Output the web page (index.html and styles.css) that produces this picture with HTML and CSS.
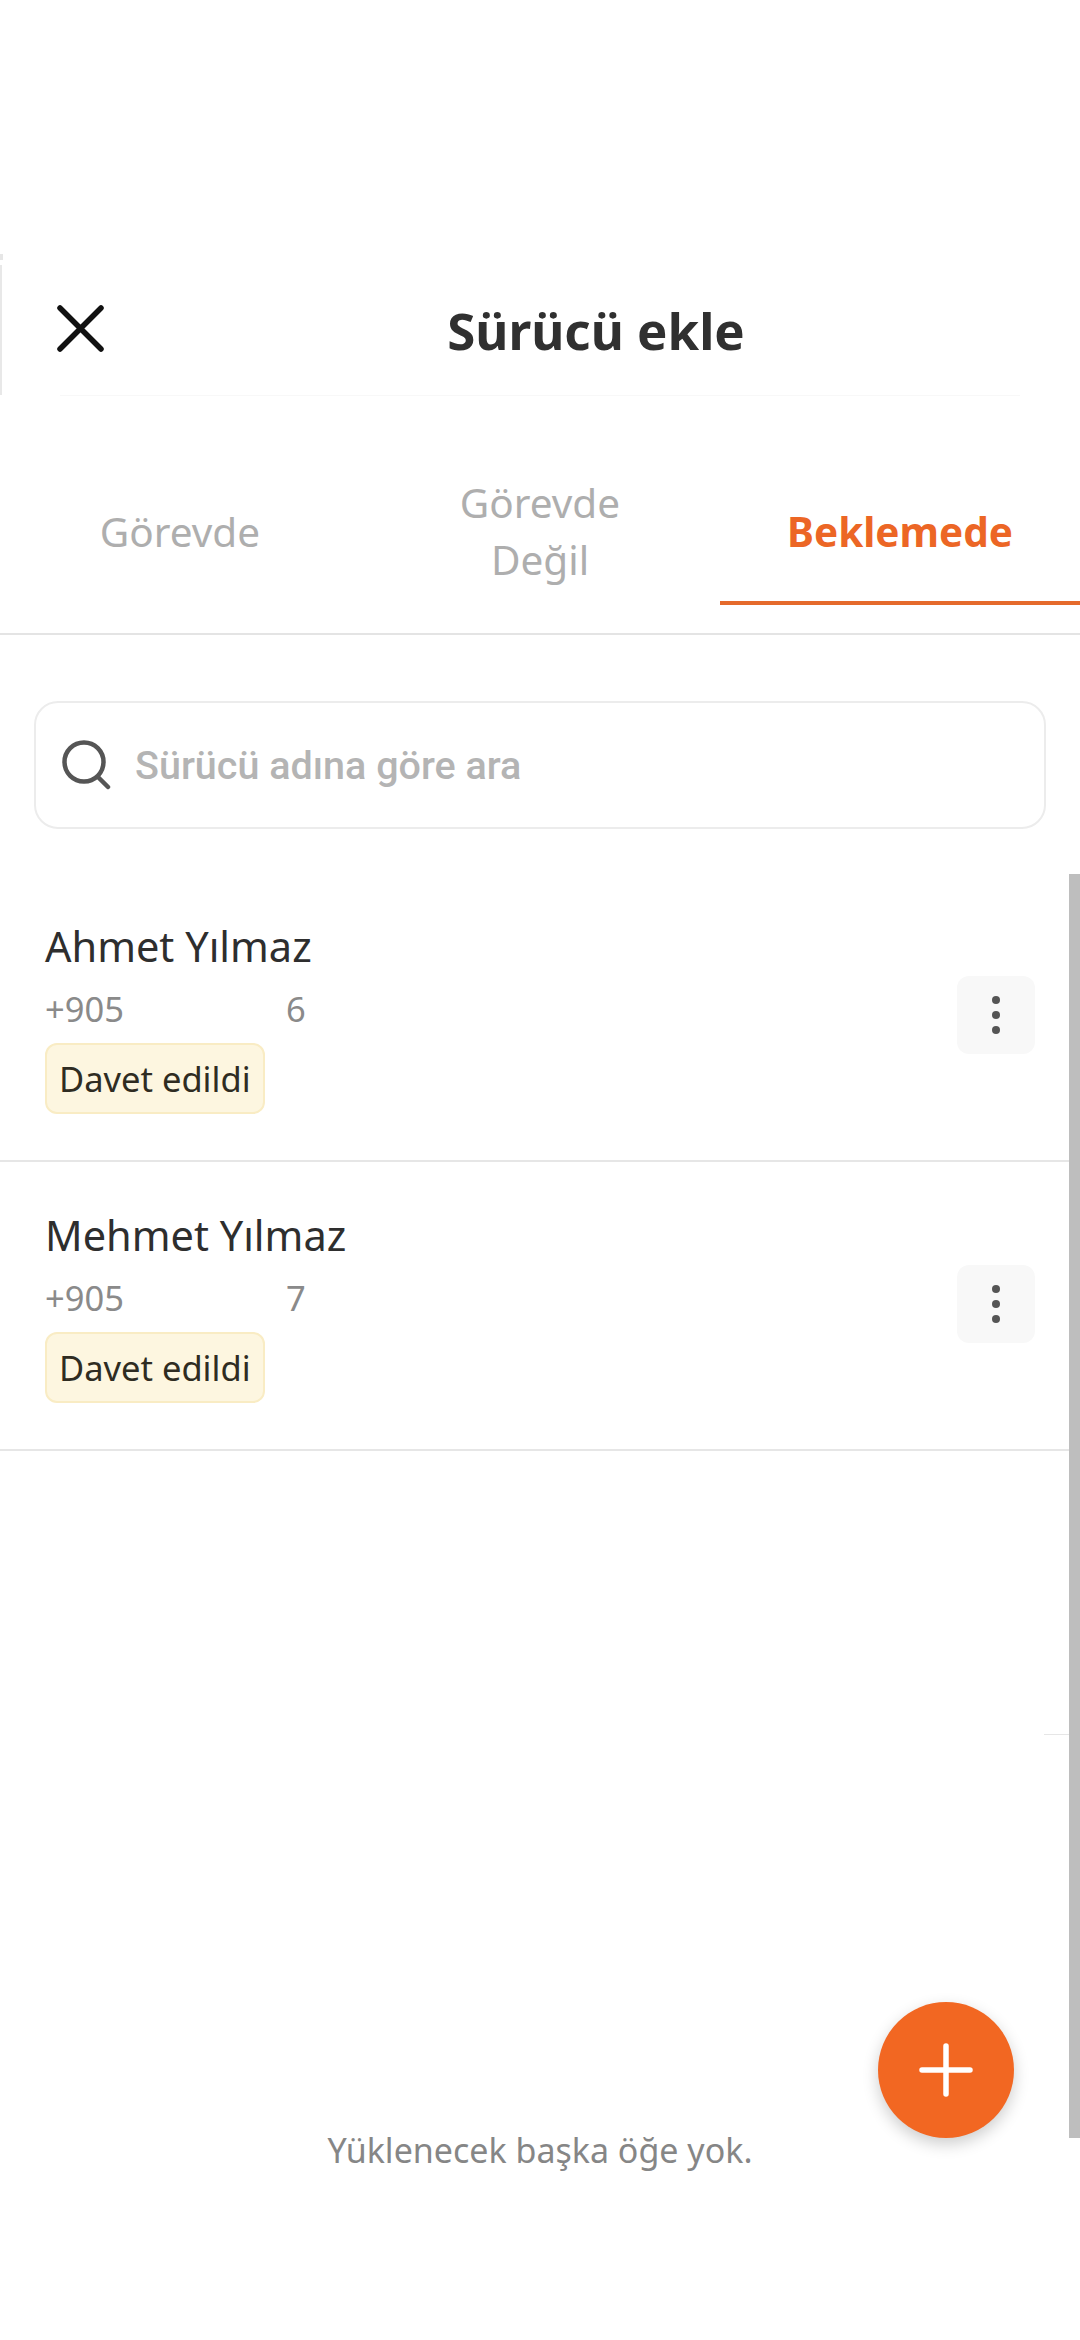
FILE: index.html
```html
<!DOCTYPE html>
<html lang="tr">
<head>
  <meta charset="UTF-8" />
  <meta name="viewport" content="width=device-width, initial-scale=1.0"/>
  <title>Sürücü ekle</title>
  <link rel="stylesheet" href="styles.css">
</head>
<body>

  <div class="top-space"><div class="top-tick"></div></div>

  <div class="header">
    <div class="close-btn">
      <svg width="49" height="49" viewBox="0 0 49 49" fill="none" stroke="#111" stroke-width="5.5" stroke-linecap="round">
        <path d="M4 4L45 45M45 4L4 45"/>
      </svg>
    </div>
    <h1 class="title">Sürücü ekle</h1>
  </div>
  <div class="header-rule"></div>

  <div class="tabs-wrap">
    <div class="tabs">
      <div class="tab">Görevde</div>
      <div class="tab">Görevde<br>Değil</div>
      <div class="tab active">Beklemede</div>
    </div>
  </div>

  <div class="search">
    <svg width="50" height="50" viewBox="0 0 50 50" fill="none" stroke="#555" stroke-width="4.5" stroke-linecap="round">
      <circle cx="22" cy="22" r="19.5"/>
      <path d="M36 37L46 47"/>
    </svg>
    <span class="search-text">Sürücü adına göre ara</span>
  </div>

  <div class="driver-list">
    <div class="driver">
      <div class="driver-info">
        <div class="driver-name">Ahmet Yılmaz</div>
        <div class="driver-phone"><span class="phone-start">+905</span><span>6</span></div>
        <div class="badge">Davet edildi</div>
      </div>
      <div class="menu-btn"><i></i><i></i><i></i></div>
    </div>
    <div class="driver">
      <div class="driver-info">
        <div class="driver-name">Mehmet Yılmaz</div>
        <div class="driver-phone"><span class="phone-start">+905</span><span>7</span></div>
        <div class="badge">Davet edildi</div>
      </div>
      <div class="menu-btn"><i></i><i></i><i></i></div>
    </div>
  </div>

  <div class="list-end">Yüklenecek başka öğe yok.</div>

  <!-- overlays -->
  <div class="scroll-stub"></div>
  <div class="scrollbar"></div>
  <div class="fab">
    <svg width="54" height="54" viewBox="0 0 54 54" fill="none" stroke="#fff" stroke-width="5.5" stroke-linecap="round">
      <path d="M27 3V51M3 27H51"/>
    </svg>
  </div>

</body>
</html>
```

FILE: styles.css
```css
body {
  position: relative;
  width: 1080px;
  height: 2340px;
  margin: 0;
  overflow: hidden;
  background: #fff;
  color: #2b2b2b;
  font-family: "Noto Sans", sans-serif;
}

.top-space {
  height: 265px;
  padding-top: 254px;
  box-sizing: border-box;
}

.top-tick {
  width: 3px;
  height: 6px;
  background: #e6e6e6;
}

.header {
  display: flex;
  align-items: center;
  height: 130px;
  border-left: 2px solid #e8e8e8;
  box-sizing: border-box;
}

.close-btn {
  display: flex;
  width: 110px;
  padding-left: 54px;
  padding-bottom: 4px;
  box-sizing: border-box;
}

.title {
  flex: 1;
  margin: 0;
  font-size: 51px;
  font-weight: 700;
  text-align: center;
  color: #303030;
}

.header-rule {
  height: 1px;
  margin: 0 60px;
  background: #f8f8f8;
}

.tabs-wrap {
  padding: 65px 0 28px;
  border-bottom: 2px solid #e4e4e4;
}

.tabs {
  display: grid;
  grid-template-columns: repeat(3, 1fr);
}

.tab {
  display: flex;
  align-items: center;
  justify-content: center;
  height: 144px;
  border-bottom: 4px solid transparent;
  box-sizing: border-box;
  font-size: 40.5px;
  line-height: 57px;
  text-align: center;
  color: #aeaeae;
}

.tab.active {
  border-bottom-color: #e56a2c;
  font-weight: 700;
  color: #ec6625;
}

.search {
  display: flex;
  align-items: center;
  gap: 23px;
  height: 128px;
  margin: 66px 34px 0;
  padding-left: 26px;
  border: 2px solid #ececec;
  border-radius: 24px;
  box-sizing: border-box;
}

.search-text {
  font-family: Roboto, sans-serif;
  font-size: 39.5px;
  font-weight: 500;
  color: #b4b4b4;
}

.driver-list {
  margin-top: 44px;
}

.driver {
  display: flex;
  align-items: center;
  justify-content: space-between;
  padding: 48px 45px 46px;
  border-bottom: 2px solid #e6e6e6;
}

.driver-name {
  font-size: 41.5px;
  line-height: 50px;
  letter-spacing: 0;
  color: #2e2e2e;
}

.driver-phone {
  display: flex;
  margin-top: 16px;
  font-size: 34.5px;
  line-height: 44px;
  color: #8a8a8a;
}

.phone-start {
  width: 241px;
}

.badge {
  width: fit-content;
  height: 71px;
  margin-top: 12px;
  padding: 0 12px;
  border: 2px solid #f9ecc4;
  border-radius: 12px;
  box-sizing: border-box;
  background: #fdf6e0;
  font-size: 34.5px;
  line-height: 67px;
  color: #2f2c22;
}

.menu-btn {
  display: flex;
  flex-direction: column;
  align-items: center;
  justify-content: center;
  gap: 7px;
  width: 78px;
  height: 78px;
  margin-bottom: 6px;
  border-radius: 12px;
  background: #f8f8f8;
}

.menu-btn i {
  width: 8px;
  height: 8px;
  border-radius: 50%;
  background: #555;
}

.list-end {
  margin-top: 674px;
  font-size: 34px;
  line-height: 50px;
  text-align: center;
  color: #868686;
}

.scroll-stub {
  position: absolute;
  top: 1734px;
  right: 0;
  width: 36px;
  height: 1px;
  background: #e6e6e6;
}

.scrollbar {
  position: absolute;
  top: 874px;
  right: 0;
  width: 11px;
  height: 1264px;
  background: #bebebe;
}

.fab {
  position: absolute;
  top: 2002px;
  left: 878px;
  display: flex;
  align-items: center;
  justify-content: center;
  width: 136px;
  height: 136px;
  border-radius: 50%;
  background: #f26722;
  box-shadow: 0 6px 16px rgba(0,0,0,0.2);
}
```
